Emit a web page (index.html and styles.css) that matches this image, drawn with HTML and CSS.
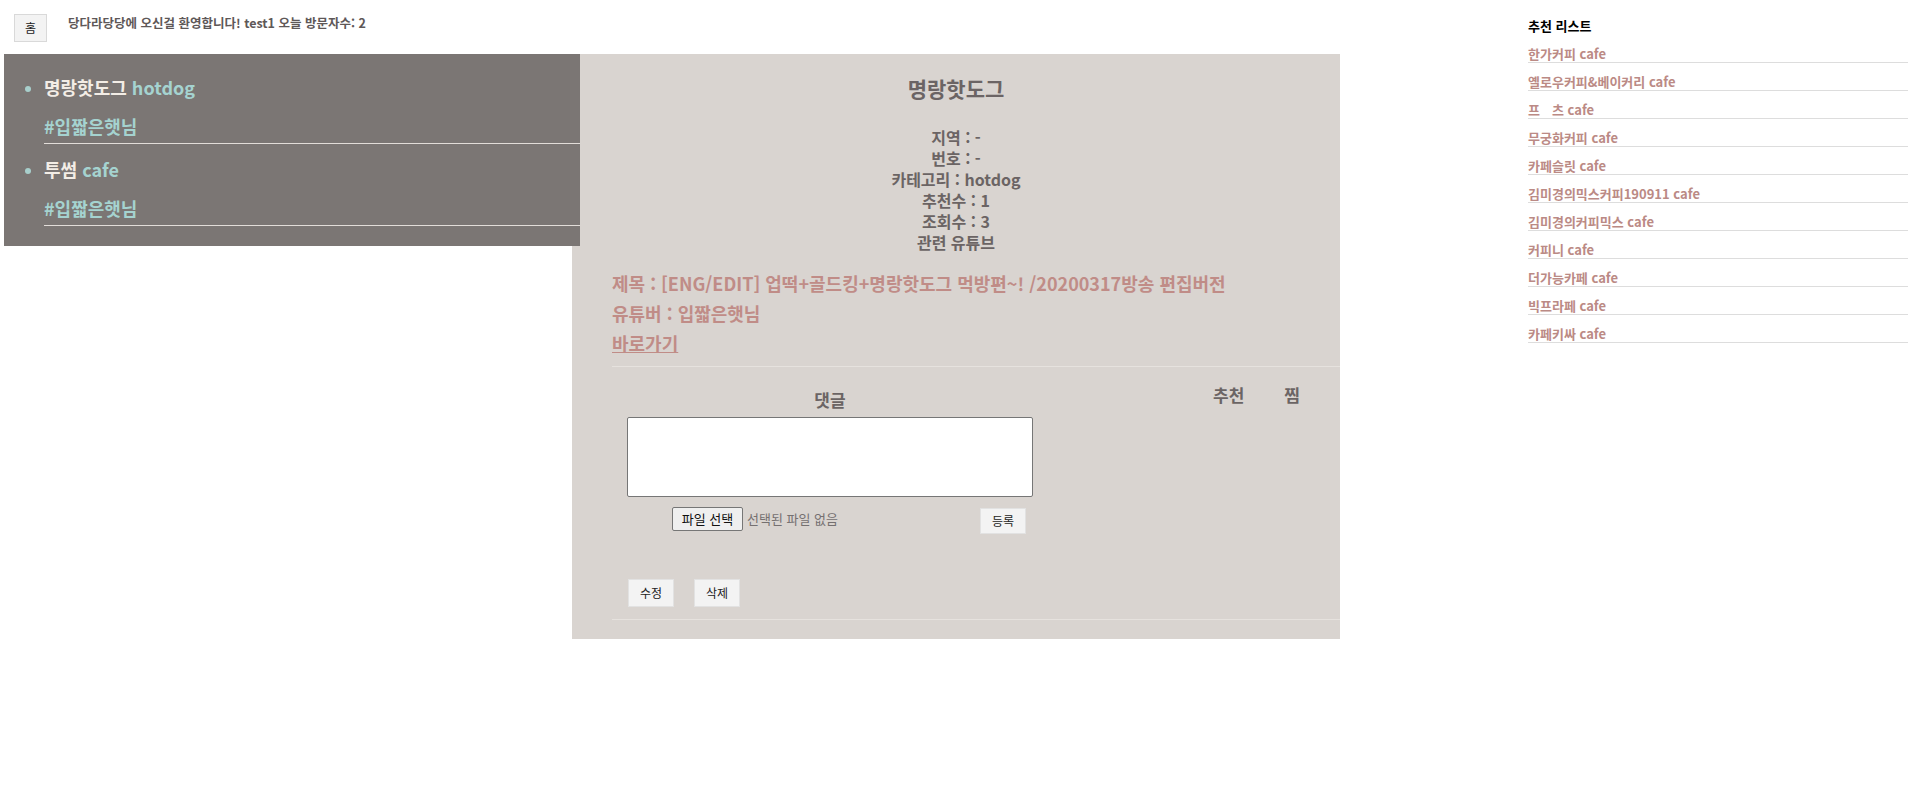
FILE: index.html
```html
<!DOCTYPE html>
<html lang="ko">
<head>
<meta charset="utf-8">
<title>당다라당당</title>
<link rel="stylesheet" href="styles.css">
</head>
<body>
<div class="page">
  <div class="main">
    <header class="topbar">
      <button class="btn home-btn" type="button">홈</button>
      <p class="welcome">당다라당당에 오신걸 환영합니다! test1 오늘 방문자수: 2</p>
    </header>
    <div class="content">
      <nav class="sidebar">
        <ul class="store-list">
          <li class="store">
            <div class="store-name"><span class="name">명랑핫도그</span> <span class="cat">hotdog</span></div>
            <div class="store-tag">#입짧은햇님</div>
          </li>
          <li class="store">
            <div class="store-name"><span class="name">투썸</span> <span class="cat">cafe</span></div>
            <div class="store-tag">#입짧은햇님</div>
          </li>
        </ul>
      </nav>
      <main class="detail">
        <h1 class="detail-title">명랑핫도그</h1>
        <div class="info">
          <div>지역 : -</div>
          <div>번호 : -</div>
          <div>카테고리 : hotdog</div>
          <div>추천수 : 1</div>
          <div>조회수 : 3</div>
          <div>관련 유튜브</div>
        </div>
        <div class="detail-body">
          <div class="youtube">
            <p>제목 : [ENG/EDIT] 업떡+골드킹+명랑핫도그 먹방편~! /20200317방송 편집버전</p>
            <p>유튜버 : 입짧은햇님</p>
            <p><a class="go-link" href="#">바로가기</a></p>
          </div>
          <div class="comment-area">
            <div class="comment-form">
              <h2 class="comment-title">댓글</h2>
              <textarea class="comment-input"></textarea>
              <div class="file-row">
                <span class="file-btn">파일 선택</span>
                <span class="file-none">선택된 파일 없음</span>
                <button class="btn submit-btn" type="button">등록</button>
              </div>
            </div>
            <div class="reactions">
              <span>추천</span>
              <span>찜</span>
            </div>
          </div>
          <div class="edit-row">
            <button class="btn small-btn" type="button">수정</button>
            <button class="btn small-btn" type="button">삭제</button>
          </div>
        </div>
      </main>
    </div>
  </div>
  <aside class="recommend">
    <h3 class="recommend-title">추천 리스트</h3>
    <ul class="recommend-list">
      <li><a href="#">한가커피 cafe</a></li>
      <li><a href="#">옐로우커피&amp;베이커리 cafe</a></li>
      <li><a href="#">프<span class="missing">릳</span>츠 cafe</a></li>
      <li><a href="#">무궁화커피 cafe</a></li>
      <li><a href="#">카페슬릿 cafe</a></li>
      <li><a href="#">김미경의믹스커피190911 cafe</a></li>
      <li><a href="#">김미경의커피믹스 cafe</a></li>
      <li><a href="#">커피니 cafe</a></li>
      <li><a href="#">더가능카페 cafe</a></li>
      <li><a href="#">빅프라페 cafe</a></li>
      <li><a href="#">카페키싸 cafe</a></li>
    </ul>
  </aside>
</div>
</body>
</html>
```
FILE: styles.css
```css
* { box-sizing: border-box; }

body {
  margin: 0;
  background: #ffffff;
  font-family: "Noto Sans CJK KR", "Noto Sans", sans-serif;
  color: #6b6464;
}

.page {
  display: flex;
  justify-content: space-between;
  align-items: flex-start;
  padding-right: 8px;
}

.main { width: 1340px; flex-shrink: 0; }

.topbar {
  display: flex;
  align-items: flex-start;
  padding: 14px 0 0 14px;
}

.btn {
  font-family: "Noto Sans CJK KR", "Noto Sans", sans-serif;
  font-size: 12px;
  color: #222;
  background: #f3f3f3;
  border: 1px solid #e2e2e2;
  border-radius: 0;
  padding: 0;
  line-height: 1;
  cursor: pointer;
}

.home-btn {
  width: 33px;
  height: 28px;
  border-color: #d9d9d9;
}

.welcome {
  margin: 0 0 0 21px;
  font-size: 12.5px;
  font-weight: 700;
  line-height: 18px;
  color: #5e5858;
}

.content {
  display: flex;
  align-items: flex-start;
  margin-top: 12px;
  padding-left: 4px;
}

.sidebar {
  width: 576px;
  flex-shrink: 0;
  background: #7b7674;
  padding: 20px 0 8px;
  z-index: 1;
}

.store-list {
  margin: 0;
  padding-left: 40px;
  list-style: disc;
  color: #a8cfcc;
}

.store { margin-bottom: 12px; }

.store-name {
  font-size: 18px;
  font-weight: 700;
  line-height: 26px;
}

.store-name .name { color: #f3ede6; }
.store-name .cat { color: #a5d3d0; font-weight: 700; }

.store-tag {
  margin-top: 13px;
  font-size: 18px;
  font-weight: 700;
  line-height: 26px;
  padding-bottom: 4px;
  border-bottom: 1px solid #e2ddd9;
  color: #a5d3d0;
}

.detail {
  width: 768px;
  flex-shrink: 0;
  margin-left: -8px;
  background: #d9d4d0;
  padding: 20px 0 19px;
}

.detail-title {
  margin: 0;
  text-align: center;
  font-size: 21px;
  font-weight: 700;
  line-height: 28px;
  color: #6b6464;
}

.info {
  margin-top: 25px;
  text-align: center;
  font-size: 16px;
  font-weight: 600;
  line-height: 21px;
  color: #6b6464;
}

.detail-body { margin-left: 40px; }

.youtube {
  margin-top: 15px;
  padding-bottom: 8px;
  border-bottom: 1px solid #e6e2de;
  color: #c08c87;
  font-size: 18px;
  font-weight: 600;
}

.youtube p {
  margin: 0;
  line-height: 30px;
}

.go-link {
  color: #c08c87;
  text-decoration: underline;
}

.comment-area {
  display: flex;
  align-items: flex-start;
}

.comment-form {
  width: 436px;
  flex-shrink: 0;
  text-align: center;
}

.comment-title {
  margin: 21px 0 0;
  font-size: 17px;
  font-weight: 700;
  line-height: 24px;
  color: #6b6464;
}

.comment-input {
  display: block;
  width: 406px;
  height: 80px;
  margin: 5px auto 0;
  border: 1px solid #767676;
  border-radius: 2px;
  background: #ffffff;
  resize: none;
}

.file-row {
  display: flex;
  align-items: flex-start;
  margin-top: 10px;
  padding-left: 60px;
}

.file-btn {
  display: inline-block;
  width: 71px;
  height: 24px;
  line-height: 22px;
  font-size: 13px;
  color: #111;
  background: #efefef;
  border: 1px solid #767676;
  border-radius: 2px;
  text-align: center;
}

.file-none {
  margin-left: 4px;
  font-size: 13px;
  line-height: 24px;
  color: #757070;
}

.submit-btn {
  margin: 1px 22px 0 auto;
  width: 46px;
  height: 26px;
}

.reactions {
  display: flex;
  gap: 40px;
  margin: 16px 40px 0 auto;
  font-size: 17px;
  font-weight: 700;
  line-height: 24px;
  color: #6b6464;
}

.edit-row {
  display: flex;
  gap: 20px;
  margin-top: 45px;
  padding: 0 0 12px 16px;
  border-bottom: 1px solid #e6e2de;
}

.small-btn {
  width: 46px;
  height: 28px;
}

.recommend {
  width: 380px;
  flex-shrink: 0;
  padding-top: 17px;
}

.recommend-title {
  margin: 0;
  font-size: 13px;
  font-weight: 700;
  line-height: 18px;
  color: #000;
}

.recommend-list {
  list-style: none;
  margin: 0;
  padding: 0;
}

.recommend-list li {
  padding-top: 11px;
  font-size: 13px;
  line-height: 16px;
  border-bottom: 1px solid #dddddd;
}

.recommend-list a {
  font-size: 13px;
  font-weight: 700;
  color: #bb8a85;
  text-decoration: none;
}

.missing { visibility: hidden; }
```
